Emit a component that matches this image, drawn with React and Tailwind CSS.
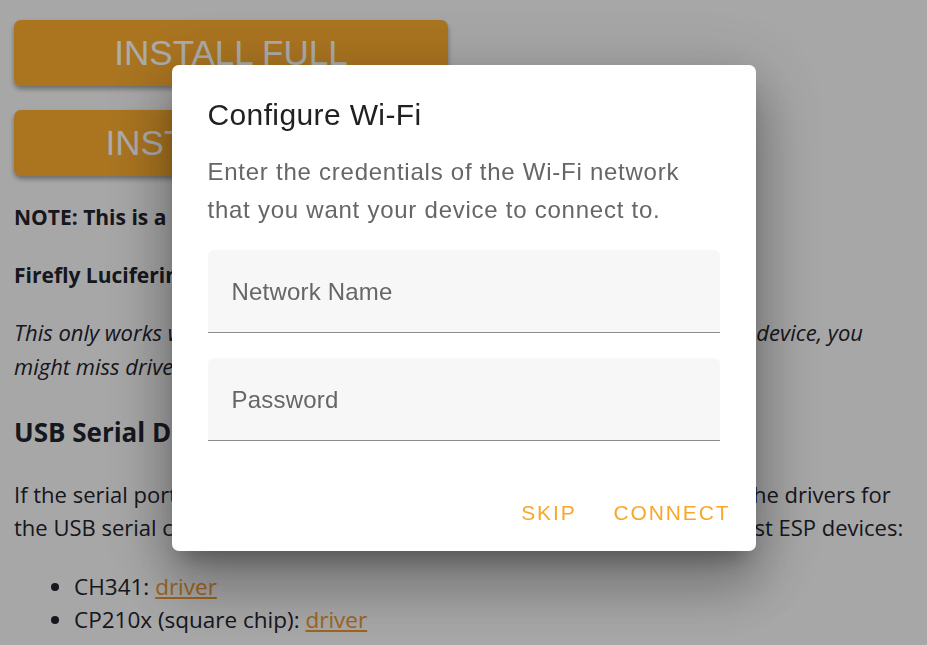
import React, { useState } from 'react';

const WifiDialog = ({ onSkip, onConnect }) => {
    const [ssid, setSsid] = useState('');
    const [password, setPassword] = useState('');

    return (
        <div className="fixed inset-0 bg-black/[0.32] flex justify-center items-start pt-[65px]">
            <div className="w-[584px] bg-white rounded-[7px] font-['Liberation_Sans',Arial,sans-serif] shadow-[0_16px_22px_-10px_rgba(0,0,0,0.3),0_36px_56px_4px_rgba(0,0,0,0.2),0_14px_68px_12px_rgba(0,0,0,0.18)]">
                {/* Title */}
                <h2 className="px-[36px] pt-[30px] text-[30px] leading-[40px] tracking-[0.375px] text-[#212121]">
                    Configure Wi-Fi
                </h2>

                {/* Content */}
                <div className="px-[36px] pt-[18px]">
                    <p className="text-[24px] leading-[38px] tracking-[0.75px] text-[#666666]">
                        Enter the credentials of the Wi-Fi network that you want your device to connect to.
                    </p>

                    <div className="mt-[21px] flex flex-col gap-[25px]">
                        <input
                            type="text"
                            value={ssid}
                            onChange={(e) => setSsid(e.target.value)}
                            placeholder="Network Name"
                            className="w-full h-[83px] px-[24px] pt-[2px] bg-[#f7f7f7] rounded-t-[6px] border-b border-[#8c8c8c] text-[24px] tracking-[0.2px] text-[#212121] placeholder:text-[#666666] outline-none"
                        />
                        <input
                            type="password"
                            value={password}
                            onChange={(e) => setPassword(e.target.value)}
                            placeholder="Password"
                            className="w-full h-[83px] px-[24px] pt-[2px] bg-[#f7f7f7] rounded-t-[6px] border-b border-[#8c8c8c] text-[24px] tracking-[0.2px] text-[#212121] placeholder:text-[#666666] outline-none"
                        />
                    </div>
                </div>

                {/* Actions */}
                <div className="flex justify-end gap-[13px] pt-[45px] pb-[11px] pr-[13px]">
                    <button
                        onClick={onSkip}
                        className="h-[54px] px-[12px] text-[21px] tracking-[1.875px] font-medium text-[#f9a72b] uppercase"
                    >
                        Skip
                    </button>
                    <button
                        onClick={onConnect}
                        className="h-[54px] px-[12px] text-[21px] tracking-[1.875px] font-medium text-[#f9a72b] uppercase"
                    >
                        Connect
                    </button>
                </div>
            </div>
        </div>
    );
};

const App = () => {
    const [showDialog, setShowDialog] = useState(true);

    return (
        <div className="min-h-screen bg-[#f7f7f7] px-[14px] pt-[20px] text-[#22222d] font-['Open_Sans','Noto_Sans',sans-serif]">
            {/* Install buttons */}
            <div className="flex flex-col gap-[24px] w-[434px]">
                <button className="h-[66px] rounded-[7px] bg-[#fcad30] text-white text-[35px] font-['Liberation_Sans',Arial,sans-serif] shadow-[0_3px_5px_rgba(0,0,0,0.35)]">
                    INSTALL FULL
                </button>
                <button className="h-[66px] rounded-[7px] bg-[#fcad30] text-white text-[35px] font-['Liberation_Sans',Arial,sans-serif] shadow-[0_3px_5px_rgba(0,0,0,0.35)]">
                    INSTALL LIGHT
                </button>
            </div>

            <p className="mt-[25px] text-[21px] leading-[33px] font-bold whitespace-nowrap">
                NOTE: This is a beta feature, use at your own risk.
            </p>
            <p className="mt-[25px] text-[21px] leading-[33px] font-bold whitespace-nowrap">
                Firefly Luciferin is needed on your PC.
            </p>
            <p className="mt-[23px] text-[22px] leading-[34px] italic whitespace-nowrap">
                This only works with Chrome, Edge and Opera browsers. If you use a generic device, you
                <br />
                might miss drivers, see below.
            </p>

            <h3 className="mt-[31px] text-[26px] leading-[36px] font-bold">USB Serial Drivers</h3>

            <p className="mt-[28px] text-[22px] leading-[33px] whitespace-nowrap">
                If the serial port is not displayed, then your computer might be missing the drivers for
                <br />
                the USB serial chip used in your ESP device. These are the drivers for most ESP devices:
            </p>

            <ul className="mt-[26px] pl-[60px] list-disc text-[22.5px] leading-[33px]">
                <li>
                    CH341: <a href="#" className="text-[#e8962e] underline">driver</a>
                </li>
                <li>
                    CP210x (square chip): <a href="#" className="text-[#e8962e] underline">driver</a>
                </li>
            </ul>

            {showDialog && (
                <WifiDialog onSkip={() => setShowDialog(false)} onConnect={() => setShowDialog(false)} />
            )}
        </div>
    );
};

export default App;
